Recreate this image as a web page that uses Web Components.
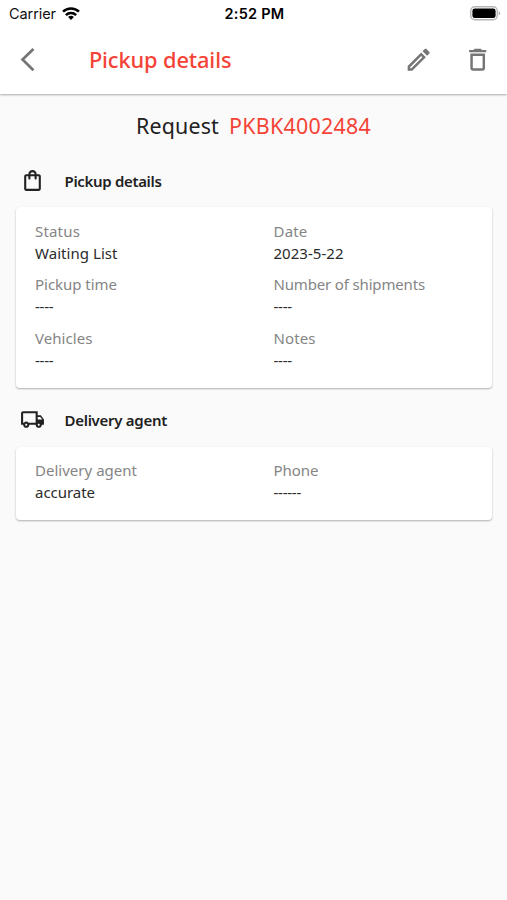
<!DOCTYPE html>
<html lang="en">
<head>
<meta charset="utf-8">
<title>Pickup details</title>
<style>
html,body{margin:0;background:#fafafa}
body{font-family:"Noto Sans",sans-serif;color:#212121}
</style>
</head>
<body>
<pickup-screen></pickup-screen>
<script>
const define = (name, markup, setup) => {
  const t = document.createElement('template');
  t.innerHTML = markup;
  customElements.define(name, class extends HTMLElement {
    connectedCallback() {
      if (this.shadowRoot) return;
      this.attachShadow({mode: 'open'}).append(t.content.cloneNode(true));
      if (setup) setup(this, this.shadowRoot);
    }
  });
};

// A line of text whose tracking is adjusted so that it spans a given width.
define('fit-text', `<style>
:host{display:inline-block;white-space:pre}
span{display:inline-block}
</style><span></span>`, (el, root) => {
  const span = root.querySelector('span');
  const text = el.getAttribute('text');
  span.textContent = text;
  const natural = span.getBoundingClientRect().width;
  const w = parseFloat(el.getAttribute('w'));
  if (natural && w) span.style.letterSpacing = ((w - natural) / text.length).toFixed(3) + 'px';
});

const ICONS = {
  back: ['0 0 24 24', '<path d="M17.5 3.200 8.600 11.900l8.900 8.700" fill="none" stroke="currentColor" stroke-width="2.200"/>'],
  edit: ['0 0 24 24', '<path d="M14.06 9.02l.92.92L5.92 19H5v-.92l9.06-9.06M17.66 3c-.25 0-.51.1-.7.29l-1.83 1.83 3.75 3.75 1.83-1.83c.39-.39.39-1.02 0-1.41l-2.34-2.34c-.2-.2-.45-.29-.71-.29zm-3.6 3.19L3 17.25V21h3.75L17.81 9.94l-3.75-3.75z"/>'],
  trash: ['0 0 24 24', '<path d="M6 19c0 1.1.9 2 2 2h8c1.1 0 2-.9 2-2V7H6v12zM8 9h8v10H8V9zm7.5-5l-1-1h-5l-1 1H5v2h14V4z"/>'],
  bag: ['0 0 24 24', '<path d="M18 6h-2c0-2.21-1.79-4-4-4S8 3.79 8 6H6c-1.1 0-2 .9-2 2v12c0 1.1.9 2 2 2h12c1.1 0 2-.9 2-2V8c0-1.1-.9-2-2-2zm-6-2c1.1 0 2 .9 2 2h-4c0-1.1.9-2 2-2zm6 16H6V8h2v2c0 .55.45 1 1 1s1-.45 1-1V8h4v2c0 .55.45 1 1 1s1-.45 1-1V8h2v12z"/>'],
  truck: ['0 0 24 24', '<path d="M20 8h-3V4H3c-1.1 0-2 .9-2 2v11h2c0 1.66 1.34 3 3 3s3-1.34 3-3h6c0 1.66 1.34 3 3 3s3-1.34 3-3h2v-5l-3-4zm-.5 1.5l1.96 2.5H17V9.500h2.500zM6 18c-.55 0-1-.45-1-1s.45-1 1-1 1 .45 1 1-.45 1-1 1zm2.220-3c-.55-.61-1.330-1-2.220-1s-1.670.39-2.220 1H3V6h12v9H8.220zM18 18c-.55 0-1-.45-1-1s.45-1 1-1 1 .45 1 1-.45 1-1 1z"/>'],
  wifi: ['0 0 18 13', '<g fill="none" stroke="currentColor" stroke-width="2.500"><path d="M1 4.700a11.500 11.500 0 0 1 16 0"/><path d="M3.900 8.100a7.300 7.300 0 0 1 10.200 0"/></g><path d="M9 13l-2.900-2.900a4.200 4.200 0 0 1 5.800 0z"/>'],
  battery: ['0 0 31 15', '<rect x=".75" y=".75" width="26.500" height="13" rx="4" fill="#fff" stroke="#b5b5b5" stroke-width="1.400"/><rect x="2.400" y="2.400" width="23.200" height="9.700" rx="2.400"/><path d="M28.700 5v4.600c2-.9 2-3.700 0-4.600z" fill="#b0b0b0"/>']
};
define('app-icon', `<style>
:host{display:block;flex:none}
svg{display:block;width:100%;height:100%;fill:currentColor}
</style><svg></svg>`, (el, root) => {
  const [box, body] = ICONS[el.getAttribute('name')];
  const svg = root.querySelector('svg');
  svg.setAttribute('viewBox', box);
  svg.innerHTML = body;
});

define('status-bar', `<style>
:host{display:grid;grid-template-columns:1fr auto 1fr;align-items:center;height:27px;padding:0 7px 0 9px;color:#111;font:14.500px/27px Inter,sans-serif}
.left{display:flex;align-items:center;gap:6px}
.time{font-weight:600;color:#000}
.wifi{width:18px;height:13px;color:#000}
.battery{width:31px;height:15px;justify-self:end;color:#000;margin-right:-1px}
</style>
<div class="left"><fit-text text="Carrier" w="47"></fit-text><app-icon class="wifi" name="wifi"></app-icon></div>
<fit-text class="time" text="2:52 PM" w="60"></fit-text>
<app-icon class="battery" name="battery"></app-icon>`);

define('app-bar', `<style>
:host{display:block;height:94px;background:#fff;box-shadow:0 1px 2px rgba(0,0,0,.32);position:relative}
.row{display:flex;align-items:center;height:66px;padding:0 14.500px 0 12px;color:#757575}
app-icon{width:29.400px;height:29.400px}
.title{margin-left:47.500px;flex:1;color:#f44336;font-weight:500;font-size:21.800px;line-height:30px}
.trash{margin-left:29.500px}
</style>
<status-bar></status-bar>
<div class="row"><app-icon name="back"></app-icon><fit-text class="title" text="Pickup details" w="142.500"></fit-text><app-icon name="edit"></app-icon><app-icon class="trash" name="trash"></app-icon></div>`);

define('request-heading', `<style>
:host{display:flex;justify-content:center;gap:10px;height:61px;line-height:64px;font-size:21.400px}
.id{color:#f44336}
</style>
<fit-text text="Request" w="83"></fit-text><fit-text class="id" text="PKBK4002484" w="142"></fit-text>`);

define('section-title', `<style>
:host{display:flex;align-items:center;height:52px;padding-left:20px;font-size:15px;font-weight:600}
</style><slot name="icon"></slot><slot></slot>`);

define('detail-card', `<style>
:host{display:grid;grid-template-columns:238.500px 1fr;row-gap:9.700px;margin:0 15px 0 16px;padding:12.700px 0 16.900px 19px;background:#fff;border-radius:4px;box-shadow:0 1px 2px rgba(0,0,0,.3)}
:host(.compact){padding:12.400px 0 16.600px 19px}
</style><slot></slot>`);

define('detail-field', `<style>
:host{display:flex;flex-direction:column;font-size:15px;line-height:22px}
fit-text{height:22px}
.label{color:#858585}
.value{color:#2b2b2b}
</style>`, (el, root) => {
  for (const kind of ['label', 'value']) {
    const f = document.createElement('fit-text');
    f.className = kind;
    f.setAttribute('text', el.getAttribute(kind));
    f.setAttribute('w', el.getAttribute(kind + '-w'));
    root.append(f);
  }
});

define('pickup-screen', `<style>
:host{display:block;width:507px;height:900px;overflow:hidden;background:#fafafa}
section-title app-icon{width:25px;height:25px}
section-title fit-text{margin-left:19.500px;padding-top:2px}
section-title{margin-top:-1px;margin-bottom:1px}
.agent{margin:5.500px 0 1.300px}
</style>
<app-bar></app-bar>
<request-heading></request-heading>
<section-title><app-icon slot="icon" name="bag"></app-icon><fit-text text="Pickup details" w="97"></fit-text></section-title>
<detail-card>
<detail-field label="Status" label-w="45" value="Waiting List" value-w="82.500"></detail-field>
<detail-field label="Date" label-w="34" value="2023-5-22" value-w="70"></detail-field>
<detail-field label="Pickup time" label-w="82" value="----" value-w="18.500"></detail-field>
<detail-field label="Number of shipments" label-w="151.500" value="----" value-w="18.500"></detail-field>
<detail-field label="Vehicles" label-w="57.500" value="----" value-w="18.500"></detail-field>
<detail-field label="Notes" label-w="42" value="----" value-w="18.500"></detail-field>
</detail-card>
<section-title class="agent"><app-icon slot="icon" name="truck"></app-icon><fit-text text="Delivery agent" w="102.500"></fit-text></section-title>
<detail-card class="compact">
<detail-field label="Delivery agent" label-w="102" value="accurate" value-w="60"></detail-field>
<detail-field label="Phone" label-w="45" value="------" value-w="27.500"></detail-field>
</detail-card>`);
</script>
</body>
</html>
